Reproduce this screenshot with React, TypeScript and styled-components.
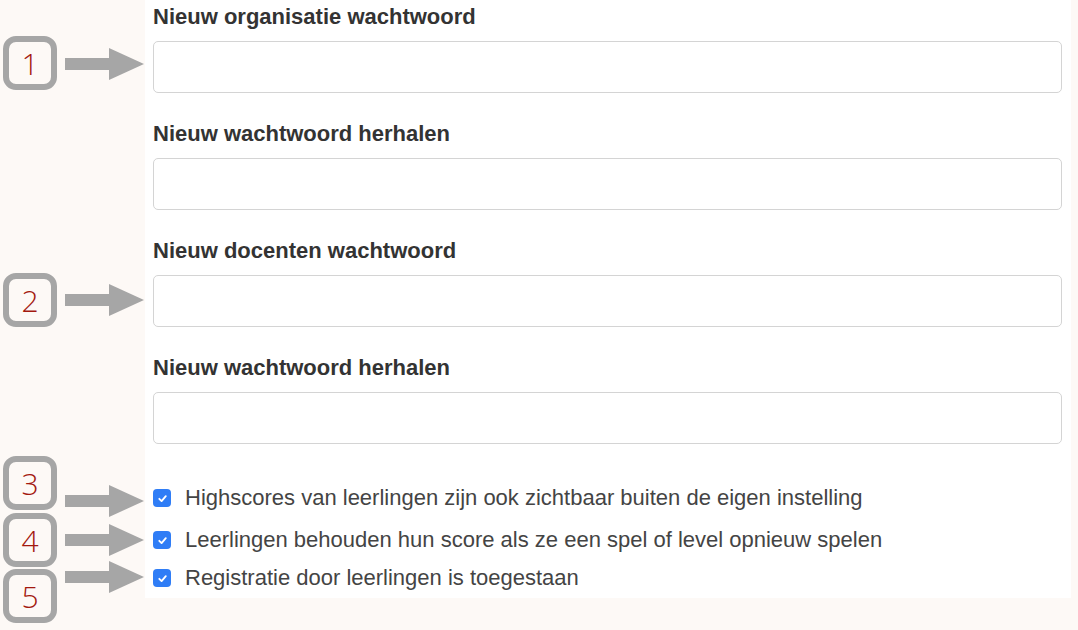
import React from "react";
import styled, { createGlobalStyle } from "styled-components";

const pageColor = '#fdf9f6';
const markColor = '#a6a6a6';

const GlobalStyle = createGlobalStyle`
  html, body {
    margin: 0;
    padding: 0;
    background-color: ${pageColor};
  }
  * {
    box-sizing: border-box;
  }
`;

const Stage = styled.div`
  position: relative;
  width: 1078px;
  height: 630px;
  background-color: ${pageColor};
  font-family: "Liberation Sans", Arial, sans-serif;
  overflow: hidden;
`;

const Panel = styled.form`
  margin-left: 145px;
  width: 926px;
  background-color: #ffffff;
  padding: 4px 9px 7px 8px;
  display: flex;
  flex-direction: column;
`;

const FieldGroup = styled.div`
  display: flex;
  flex-direction: column;
  margin-bottom: 28px;
`;

const FieldLabel = styled.label`
  font-size: 22px;
  line-height: 26px;
  font-weight: bold;
  color: #333333;
  margin-bottom: 11px;
`;

const TextInput = styled.input`
  height: 52px;
  width: 100%;
  border: 1px solid #d4d4d4;
  border-radius: 5px;
  background: #ffffff;
  font-size: 20px;
  padding: 0 12px;
  &:focus {
    outline: none;
    border-color: #66afe9;
  }
`;

interface CheckRowProps {
  $top: number;
}
const CheckRow = styled.label<CheckRowProps>`
  display: flex;
  align-items: center;
  gap: 14px;
  margin-top: ${props => props.$top}px;
  font-size: 22px;
  line-height: 26px;
  color: #444444;
`;

const CheckBox = styled.span`
  width: 18px;
  height: 18px;
  flex: none;
  border-radius: 4px;
  background-color: #2f7df6;
  display: flex;
  align-items: center;
  justify-content: center;
`;

const Overlay = styled.div`
  position: absolute;
  inset: 0;
  pointer-events: none;
`;

interface PlaceProps {
  $x: number;
  $y: number;
}
const NumberBox = styled.div<PlaceProps>`
  position: absolute;
  left: ${props => props.$x}px;
  top: ${props => props.$y}px;
  width: 54px;
  height: 54px;
  border: 6px solid ${markColor};
  border-radius: 13px;
  background-color: ${pageColor};
  display: flex;
  align-items: center;
  justify-content: center;
  font-family: "Open Sans", "Liberation Sans", sans-serif;
  font-weight: 300;
  font-size: 30px;
  color: #a3180f;
`;

const Arrow = styled.svg<PlaceProps>`
  position: absolute;
  left: ${props => props.$x}px;
  top: ${props => props.$y}px;
`;

const fields = [
  { id: 'org1', label: 'Nieuw organisatie wachtwoord' },
  { id: 'org2', label: 'Nieuw wachtwoord herhalen' },
  { id: 'doc1', label: 'Nieuw docenten wachtwoord' },
  { id: 'doc2', label: 'Nieuw wachtwoord herhalen' },
];

const options = [
  { top: 13, text: 'Highscores van leerlingen zijn ook zichtbaar buiten de eigen instelling' },
  { top: 16, text: 'Leerlingen behouden hun score als ze een spel of level opnieuw spelen' },
  { top: 12, text: 'Registratie door leerlingen is toegestaan' },
];

const boxes = [
  { n: 1, y: 36 },
  { n: 2, y: 273 },
  { n: 3, y: 456 },
  { n: 4, y: 513 },
  { n: 5, y: 569 },
];

const arrows = [64, 300, 501, 540, 577];

function CheckMark() {
  return (
    <svg width="11" height="11" viewBox="0 0 12 12">
      <path d="M2.5 6.3 L5 8.8 L9.6 3.4" fill="none" stroke="#ffffff" strokeWidth="2" strokeLinecap="round" strokeLinejoin="round" />
    </svg>
  );
}

export default function App() {
  return (
    <>
      <GlobalStyle />
      <Stage>
        <Panel onSubmit={e => e.preventDefault()}>
          {fields.map(f => (
            <FieldGroup key={f.id}>
              <FieldLabel htmlFor={f.id}>{f.label}</FieldLabel>
              <TextInput id={f.id} type="password" />
            </FieldGroup>
          ))}
          {options.map(o => (
            <CheckRow key={o.text} $top={o.top}>
              <CheckBox>
                <CheckMark />
              </CheckBox>
              {o.text}
            </CheckRow>
          ))}
        </Panel>
        <Overlay>
          {boxes.map(b => (
            <NumberBox key={b.n} $x={3} $y={b.y}>{b.n}</NumberBox>
          ))}
          {arrows.map(y => (
            <Arrow key={y} $x={65} $y={y - 16} width="80" height="32" viewBox="0 0 80 32">
              <path d="M0 10 H44 V0 L79 16 L44 32 V22 H0 Z" fill={markColor} />
            </Arrow>
          ))}
        </Overlay>
      </Stage>
    </>
  );
}
